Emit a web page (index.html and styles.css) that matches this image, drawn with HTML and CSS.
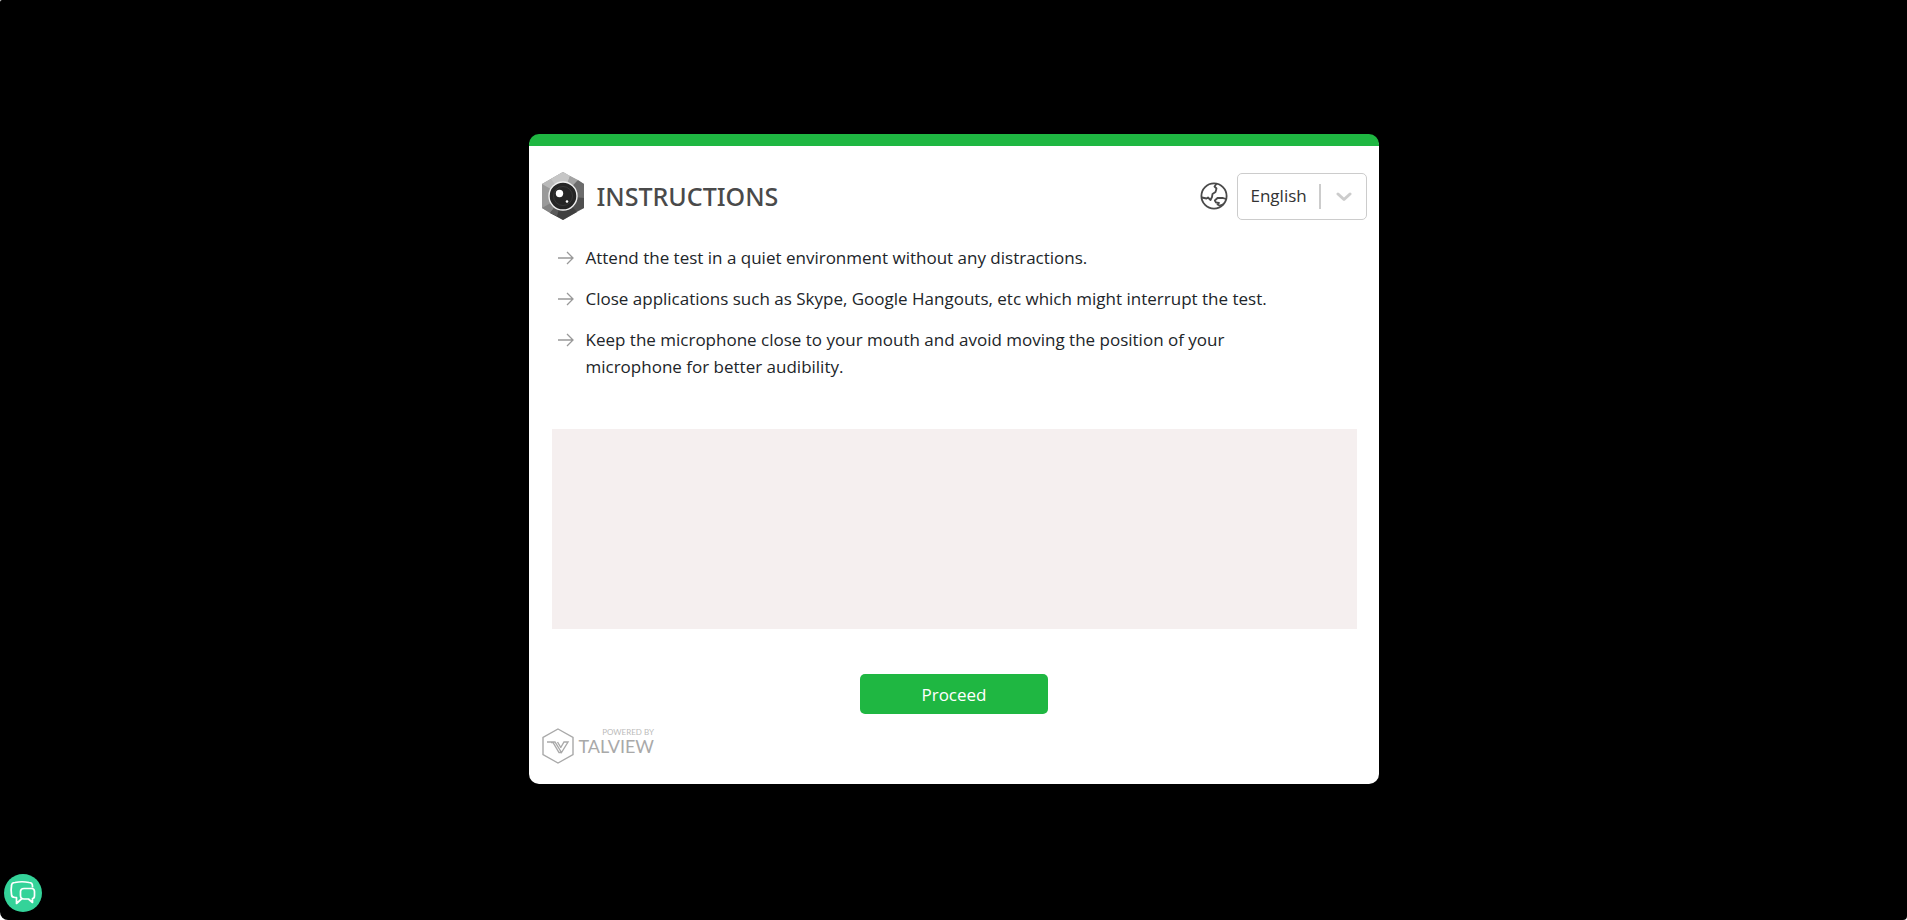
FILE: index.html
```html
<!DOCTYPE html>
<html lang="en">
<head>
<meta charset="utf-8">
<title>Instructions</title>
<link rel="stylesheet" href="styles.css">
</head>
<body>
<div class="page">
  <main class="card">
    <header class="head">
      <svg class="lens" viewBox="0 0 42 48" aria-hidden="true">
        <path fill="#9a9a9a" d="M21 0 42 12V36L21 48 0 36V12Z"/>
        <path fill="#b9b9b9" d="M21 0 0 12 21 24Z"/>
        <path fill="#c6c6c6" d="M21 0 28 4 21 24 9 7Z"/>
        <path fill="#a3a3a3" d="M28 4 36 8 21 24Z"/>
        <path fill="#6c6c6c" d="M36 8 42 12V28L21 24Z"/>
        <path fill="#4f4f4f" d="M42 26V36L34 40 21 24Z"/>
        <path fill="#3f3f3f" d="M35 40 21 48 8 41 21 24Z"/>
        <path fill="#838383" d="M0 36 8 41 21 24Z"/>
        <path fill="#5b5b5b" d="M8 41 15 44 21 24Z"/>
        <circle cx="21" cy="24" r="14" fill="#252525" stroke="#f1f1f1" stroke-width="1.4"/>
        <circle cx="21" cy="24" r="9.5" fill="none" stroke="#383838"/>
        <circle cx="17.500" cy="21.500" r="3.700" fill="#fff"/>
        <circle cx="25" cy="29.500" r="1.300" fill="#fff"/>
      </svg>
      <h1 class="title">INSTRUCTIONS</h1>
      <label class="globe" for="language" aria-label="Language">
        <svg viewBox="0 0 28 28" fill="none" stroke="#4a4a4a" stroke-width="1.800" stroke-linejoin="round" aria-hidden="true">
          <circle cx="14" cy="14" r="12.600"/>
          <path d="M16.500 1.800 14.500 4.500 16.500 6.500 15.500 10 12.500 12 12 15 10.500 18 8 15.500 6.500 16.500 1.800 15.500"/>
          <path d="M26 17 22.500 15.800 17.500 16 14.800 18.500 16 20.500 19 20.800 17.500 22.500 19.500 23.500 23 22.500 24 21"/>
        </svg>
      </label>
      <div class="picker">
        <select class="picker-select" id="language"><option>English</option></select>
        <span class="picker-line"></span>
        <svg class="picker-arrow" viewBox="0 0 16 10" aria-hidden="true"><path d="M2 2 8 7.500 14 2" fill="none" stroke="#ccc" stroke-width="3" stroke-linecap="round" stroke-linejoin="round"/></svg>
      </div>
    </header>
    <ul class="list">
      <li class="item"><svg class="arrow" viewBox="0 0 16 14" aria-hidden="true"><path d="M0 7H15M9 1 15 7 9 13"/></svg><span>Attend the test in a quiet environment without any distractions.</span></li>
      <li class="item"><svg class="arrow" viewBox="0 0 16 14" aria-hidden="true"><path d="M0 7H15M9 1 15 7 9 13"/></svg><span>Close applications such as Skype, Google Hangouts, etc which might interrupt the test.</span></li>
      <li class="item"><svg class="arrow" viewBox="0 0 16 14" aria-hidden="true"><path d="M0 7H15M9 1 15 7 9 13"/></svg><span>Keep the microphone close to your mouth and avoid moving the position of your microphone for better audibility.</span></li>
    </ul>
    <section class="panel"></section>
    <button class="proceed" type="button">Proceed</button>
    <footer class="brand">
      <svg class="brand-mark" viewBox="0 0 32 36" fill="none" stroke="#a9a9a9" stroke-width="1.400" aria-hidden="true">
        <path d="M16 1 31 9.500V26.500L16 35 1 26.500V9.500Z"/>
        <path d="M5 14H13L19.500 24.500 26 14H22L18.500 20M9 14.500H11L17 24.500H19.500M15.500 14 18.500 19"/>
      </svg>
      <div class="brand-text"><span class="brand-small">POWERED BY</span><span class="brand-name">TALVIEW</span></div>
    </footer>
  </main>
  <button class="chat" type="button" aria-label="Chat">
    <svg viewBox="0 0 38 38" fill="none" stroke="#fff" stroke-width="1.700" stroke-linejoin="round" aria-hidden="true">
      <path d="M28.500 13.500V12Q28.500 8.500 25 8.500 18 7 11 8.500 7.500 8.500 7.500 12 6.700 16.500 7.500 20.500 7.500 23.500 11 23.500H12.500V29.500L18 24.500"/>
      <path d="M20 14.500H27.500Q30.500 14.500 30.500 17.500V21.500Q30.500 24.500 28.500 24.500V28.500L24.500 25H20Q16.500 25 16.500 21.500V17.500Q16.500 14.500 20 14.500Z"/>
    </svg>
  </button>
</div>
</body>
</html>
```
FILE: styles.css
```css
* { box-sizing: border-box; }
html { background: #fff; }
body { margin: 0; font-family: "Open Sans", "Noto Sans", sans-serif; font-size: 17px; color: #212529; }
.page { position: relative; min-height: 100vh; padding-bottom: 2px; background: #000; border-radius: 2px 0 4px 8px; display: flex; align-items: center; justify-content: center; }
.card { width: 850px; max-width: 100%; min-height: 650px; background: #fff; border-top: 12px solid #1fb742; border-radius: 10px; padding: 26px 12px 20px 13px; display: flex; flex-direction: column; }
.head { display: flex; align-items: center; }
.lens { width: 42px; height: 48px; flex: none; }
.title { margin: 0 0 0 13px; flex: 1; font-family: "Noto Sans", "Open Sans", sans-serif; font-size: 25px; font-weight: 500; line-height: 32px; color: #4a4a4a; }
.globe { width: 28px; height: 28px; margin-right: 9px; }
.globe svg { display: block; width: 28px; height: 28px; }
.picker { position: relative; width: 130px; height: 47px; }
.picker-select { width: 100%; height: 100%; appearance: none; border: 1px solid #ccc; border-radius: 5px; background: #fff; padding: 0 48px 2px 13px; font: inherit; color: #333; }
.picker-line { position: absolute; left: 82px; top: 11px; width: 2px; height: 25px; background: #ccc; pointer-events: none; }
.picker-arrow { position: absolute; left: 99px; top: 19px; width: 16px; height: 10px; pointer-events: none; }
.list { list-style: none; margin: 24px 80px 0 16px; padding: 0; display: flex; flex-direction: column; gap: 14px; line-height: 27px; }
.item { display: flex; gap: 12px; }
.arrow { width: 16px; height: 14px; margin-top: 7px; flex: none; fill: none; stroke: #999; stroke-width: 1.3; }
.panel { margin: 49px 10px 0; height: 200px; background: #f5efef; }
.proceed { align-self: center; margin-top: 45px; width: 188px; height: 40px; padding: 0; border: 0; border-radius: 5px; background: #1fb742; color: #fff; font: inherit; }
.brand { display: flex; gap: 5px; margin-top: 14px; color: #a9a9a9; font-family: Lato, sans-serif; }
.brand-mark { width: 32px; height: 36px; }
.brand-text { display: flex; flex-direction: column; }
.brand-small { align-self: flex-end; font-size: 8px; line-height: 9px; color: #bbb; }
.brand-name { font-size: 18px; line-height: 18px; }
.chat { position: absolute; left: 4px; bottom: 8px; width: 38px; height: 38px; padding: 0; border: 0; border-radius: 50%; background: #34d399; }
.chat svg { display: block; width: 38px; height: 38px; }
```
